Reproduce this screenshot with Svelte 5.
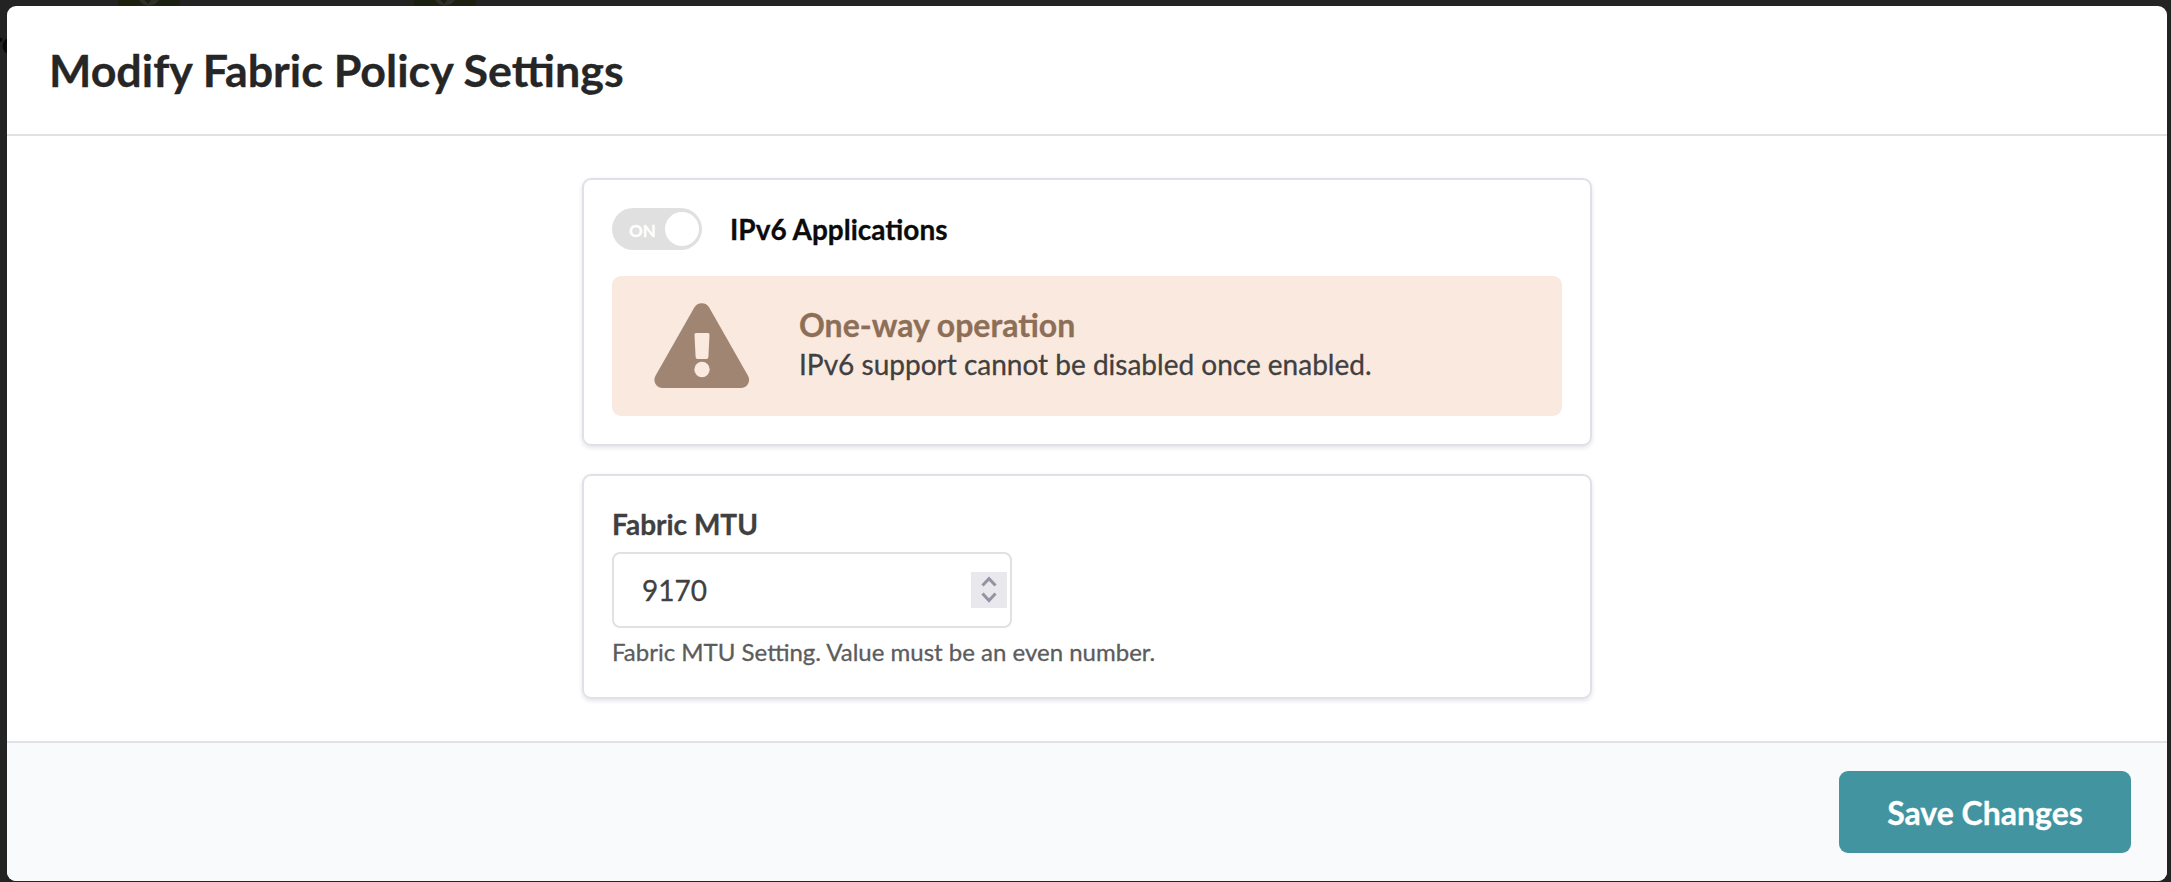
<script>
  let mtu = $state(9170);
  const badges = [118, 414];
</script>

<div class="backdrop">
  {#each badges as left}
    <span class="badge" style="left: {left}px">
      <svg viewBox="0 0 62 8" width="62" height="8">
        <circle cx="31" cy="-6" r="11.500" fill="#2f2f2d" />
        <path d="M24 -5l6 6 8-10" fill="none" stroke="#1b210e" stroke-width="4" />
      </svg>
    </span>
  {/each}
  <span class="behind">ro</span>
  <div class="modal">
    <header><h1>Modify Fabric Policy Settings</h1></header>
    <main>
      <section class="card ipv6">
        <div class="row">
          <div class="toggle"><span>ON</span><i></i></div>
          <strong>IPv6 Applications</strong>
        </div>
        <div class="warning">
          <svg width="96" height="86" viewBox="0 0 96 86">
            <path fill="#a08572" d="M40.3 4.6a8.6 8.6 0 0 1 14.9 0L94 72.700a8.300 8.300 0 0 1-7.200 12.400H8.700a8.300 8.300 0 0 1-7.200-12.400z" />
            <path fill="#fae9df" d="M42 30h12a1.500 1.500 0 0 1 1.500 1.600l-1.100 22.400a2 2 0 0 1-2 1.900h-8.800a2 2 0 0 1-2-1.900L40.500 31.600a1.500 1.500 0 0 1 1.500-1.600z" />
            <circle cx="48" cy="66.500" r="7.700" fill="#fae9df" />
          </svg>
          <div class="message">
            <h2>One-way operation</h2>
            <p>IPv6 support cannot be disabled once enabled.</p>
          </div>
        </div>
      </section>
      <section class="card mtu">
        <h3>Fabric MTU</h3>
        <div class="field">
          <span>{mtu}</span>
          <button class="spinner" aria-label="Adjust value">
            <svg width="36" height="36" viewBox="0 0 36 36" fill="none" stroke="#9393a2" stroke-width="3">
              <path d="M11.500 13.500L18 6.700l6.500 6.800M11.500 21.500l6.500 7 6.500-7" />
            </svg>
          </button>
        </div>
        <p class="help">Fabric MTU Setting. Value must be an even number.</p>
      </section>
    </main>
    <footer><button class="save">Save Changes</button></footer>
  </div>
</div>

<style>
  :global(body) { margin: 0; overflow: hidden; }
  * { box-sizing: border-box; }
  h1, h2, h3, p { margin: 0; }
  .backdrop {
    position: relative;
    width: 2171px;
    height: 882px;
    padding: 6px 4px 1px 7px;
    background: #232323;
    font-family: Lato, sans-serif;
    -webkit-text-stroke: 0.3px currentColor;
    overflow: hidden;
  }
  .badge { position: absolute; top: 0; width: 62px; height: 8px; background: #1b210e; overflow: hidden; }
  .badge svg { display: block; }
  .behind { position: absolute; top: 26px; right: 2152px; font-size: 30px; line-height: 32px; font-weight: 700; color: #080808; }
  .modal {
    position: relative;
    height: 875px;
    display: flex;
    flex-direction: column;
    background: #fff;
    border-radius: 9px;
    overflow: hidden;
  }
  header { height: 130px; padding: 0 42px; border-bottom: 2px solid #dfe2e3; display: flex; align-items: center; }
  h1 { font-size: 44.800px; line-height: 56px; font-weight: 700; color: #262626; white-space: nowrap; }
  main { flex: 1; display: flex; flex-direction: column; align-items: center; gap: 28px; padding-top: 42px; }
  .card {
    width: 1010px;
    border: 2px solid #dfe1e7;
    border-radius: 9px;
    padding: 28px;
    box-shadow: 0 2px 4px rgba(40, 50, 90, 0.13);
  }
  .ipv6 { height: 268px; }
  .row { display: flex; align-items: center; height: 42px; gap: 28px; }
  .toggle {
    width: 90px;
    height: 42px;
    border-radius: 21px;
    background: #e0e0e0;
    display: flex;
    align-items: center;
    justify-content: space-between;
    padding: 0 3px 0 17px;
    color: #fff;
    font-size: 17px;
    line-height: 22px;
    font-weight: 700;
  }
  .toggle span { padding-top: 3px; }
  .toggle i { width: 34px; height: 34px; border-radius: 50%; background: #fff; }
  .row strong { font-size: 28px; line-height: 36px; font-weight: 700; color: #0b0b0b; white-space: nowrap; }
  .warning {
    margin-top: 26px;
    height: 140px;
    border-radius: 9px;
    background: #fae9df;
    display: flex;
    align-items: center;
    padding-left: 41.500px;
    gap: 49.500px;
  }
  .message { display: flex; flex-direction: column; white-space: nowrap; margin-top: -4px; }
  h2 { font-size: 32px; line-height: 40px; font-weight: 700; color: #8d6e57; }
  .message p { font-size: 28px; line-height: 40px; color: #404040; margin-top: -1px; }
  .mtu { height: 225px; }
  h3 { margin-top: 2px; font-size: 28px; line-height: 36px; font-weight: 700; color: #404040; }
  .field {
    margin-top: 10px;
    width: 400px;
    height: 76px;
    border: 2px solid #dfe1e4;
    border-radius: 8px;
    display: flex;
    align-items: center;
    justify-content: space-between;
    padding: 0 3px 0 28px;
    font-size: 28px;
    color: #404040;
  }
  .spinner { width: 36px; height: 36px; border: 0; padding: 0; background: #e9e8ed; }
  .spinner svg { display: block; }
  .help { margin-top: 8px; font-size: 24px; line-height: 32px; color: #5c5c5c; white-space: nowrap; }
  footer { height: 140px; border-top: 2px solid #dfe2e6; background: #f8fafc; display: flex; justify-content: flex-end; padding: 28px 36px 0 0; }
  .save { width: 292px; height: 82px; border: 0; border-radius: 9px; background: #4294a0; color: #fff; font: 700 32px/40px Lato, sans-serif; padding: 2px 0 0; }
</style>
